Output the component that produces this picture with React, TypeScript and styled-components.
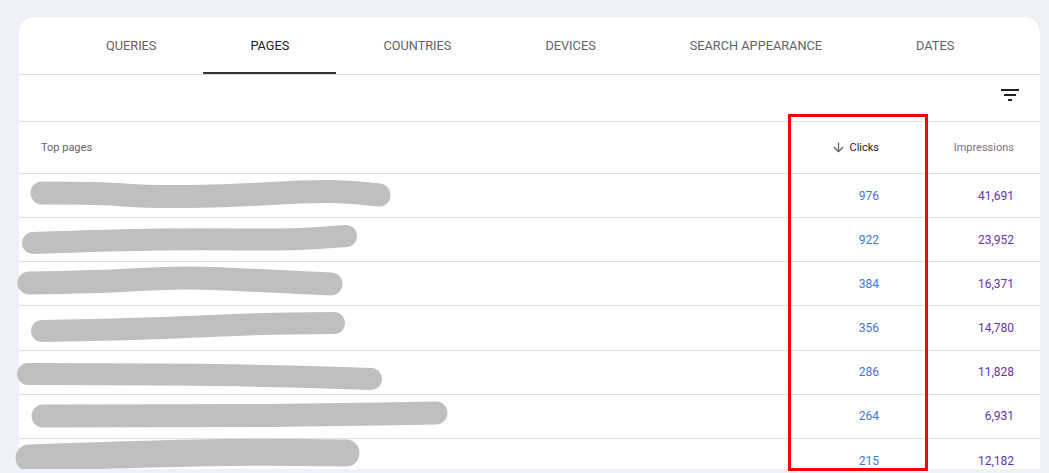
import React from "react";
import styled, {createGlobalStyle} from "styled-components";

const GlobalStyle = createGlobalStyle`
	html, body {
		margin: 0;
		padding: 0;
		background: #eef2f8;
		font-family: Roboto, "Liberation Sans", Arial, sans-serif;
		overflow: hidden;
	}
`;
const Page = styled.div`
	position: relative;
	height: 473px;
	padding: 17px 9px 0 19px;
	box-sizing: border-box;
`;
const Card = styled.div`
	background: #fff;
	border-radius: 16px 16px 0 0;
	height: 452px;
	overflow-x: visible;
	overflow-y: clip;
`;
const TabBar = styled.div`
	display: flex;
	height: 58px;
	padding-left: 40px;
	border-bottom: 1px solid #e0e0e0;
	box-sizing: border-box;
`;
const Tab = styled.div<{active?: boolean}>`
	position: relative;
	display: flex;
	align-items: center;
	padding: 0 47px;
	font-size: 12.75px;
	text-transform: uppercase;
	color: ${(p) => (p.active ? "#202124" : "#5f6368")};
	&::after{
		content: "";
		display: ${(p) => (p.active ? "block" : "none")};
		position: absolute;
		left: 0;
		right: 0;
		bottom: 0;
		height: 2px;
		background: #333;
	}
`;
const Toolbar = styled.div`
	display: flex;
	justify-content: flex-end;
	align-items: flex-start;
	height: 47px;
	padding: 8px 18px 0 0;
	border-bottom: 1px solid #e0e0e0;
	box-sizing: border-box;
`;
const Row = styled.div<{head?: boolean}>`
	display: grid;
	grid-template-columns: 1fr 135px 135px;
	align-items: center;
	height: ${(p) => (p.head ? "52px" : "44.17px")};
	padding-right: 26px;
	border-bottom: 1px solid #e0e0e0;
	box-sizing: border-box;
`;
const HeadLabel = styled.div`
	padding-left: 22px;
	font-size: 11px;
	color: #5f6368;
`;
const HeadMetric = styled.div<{sorted?: boolean}>`
	display: flex;
	justify-content: flex-end;
	align-items: center;
	gap: 3px;
	font-size: 11px;
	color: ${(p) => (p.sorted ? "#202124" : "#7b6f84")};
`;
const PageCell = styled.div`
	position: relative;
	height: 43px;
`;
const Redaction = styled.svg`
	position: absolute;
	left: 0;
	top: 0;
	overflow: visible;
`;
const Value = styled.div<{kind: "clicks" | "impressions"}>`
	text-align: right;
	font-size: 12px;
	color: ${(p) => (p.kind === "clicks" ? "#4277d0" : "#6434a6")};
`;
const Highlight = styled.div`
	position: absolute;
	left: 788px;
	top: 114px;
	width: 140px;
	height: 357px;
	border: 3px solid #ff0000;
	box-sizing: border-box;
	pointer-events: none;
`;

const tabs = ["Queries", "Pages", "Countries", "Devices", "Search appearance", "Dates"];

// redaction strokes, x relative to card left, y relative to row top
const rows = [
	{clicks: "976", impressions: "41,691", w: 23, pts: [[23, 19], [80, 19], [131, 23], [211, 22], [291, 17], [330, 18], [360, 21]]},
	{clicks: "922", impressions: "23,952", w: 22, pts: [[14, 25], [100, 22], [181, 21], [271, 22], [327, 18]]},
	{clicks: "384", impressions: "16,371", w: 23, pts: [[10, 21], [80, 20], [161, 15], [230, 18], [312, 22]]},
	{clicks: "356", impressions: "14,780", w: 22, pts: [[23, 24], [130, 22], [230, 17], [315, 16]]},
	{clicks: "286", impressions: "11,828", w: 22, pts: [[9, 23], [130, 23], [260, 25], [352, 28]]},
	{clicks: "264", impressions: "6,931", w: 23, pts: [[24, 21], [200, 21], [300, 20], [417, 18]]},
	{clicks: "215", impressions: "12,182", w: 27, pts: [[10, 19], [120, 15], [230, 13], [327, 14]]},
];

// smooth path through midpoints
function toPath(pts: number[][]){
	let d = `M${pts[0][0]} ${pts[0][1]}`;
	for(let i = 1; i < pts.length - 1; i++){
		const mx = (pts[i][0] + pts[i + 1][0]) / 2;
		const my = (pts[i][1] + pts[i + 1][1]) / 2;
		d += ` Q${pts[i][0]} ${pts[i][1]} ${mx} ${my}`;
	}
	const last = pts[pts.length - 1];
	d += ` L${last[0]} ${last[1]}`;
	return d;
}

function App(){
	return (
		<Page>
			<GlobalStyle/>
			<Card>
				<TabBar>
					{tabs.map((t) => <Tab key={t} active={t === "Pages"}>{t}</Tab>)}
				</TabBar>
				<Toolbar>
					<svg width="24" height="24" viewBox="0 0 24 24" fill="#202124">
						<path d="M10 18h4v-2h-4v2zM3 6v2h18V6H3zm3 7h12v-2H6v2z"/>
					</svg>
				</Toolbar>
				<Row head>
					<HeadLabel>Top pages</HeadLabel>
					<HeadMetric sorted>
						<svg width="15" height="15" viewBox="0 0 24 24" fill="#5f6368">
							<path d="M20 12l-1.41-1.41L13 16.17V4h-2v12.17l-5.58-5.59L4 12l8 8 8-8z"/>
						</svg>
						Clicks
					</HeadMetric>
					<HeadMetric>Impressions</HeadMetric>
				</Row>
				{rows.map((r) => (
					<Row key={r.clicks}>
						<PageCell>
							<Redaction width="440" height="43">
								<path d={toPath(r.pts)} fill="none" stroke="#bfbfbf" strokeWidth={r.w} strokeLinecap="round" strokeLinejoin="round"/>
							</Redaction>
						</PageCell>
						<Value kind="clicks">{r.clicks}</Value>
						<Value kind="impressions">{r.impressions}</Value>
					</Row>
				))}
			</Card>
			<Highlight/>
		</Page>
	);
}
export default App;
